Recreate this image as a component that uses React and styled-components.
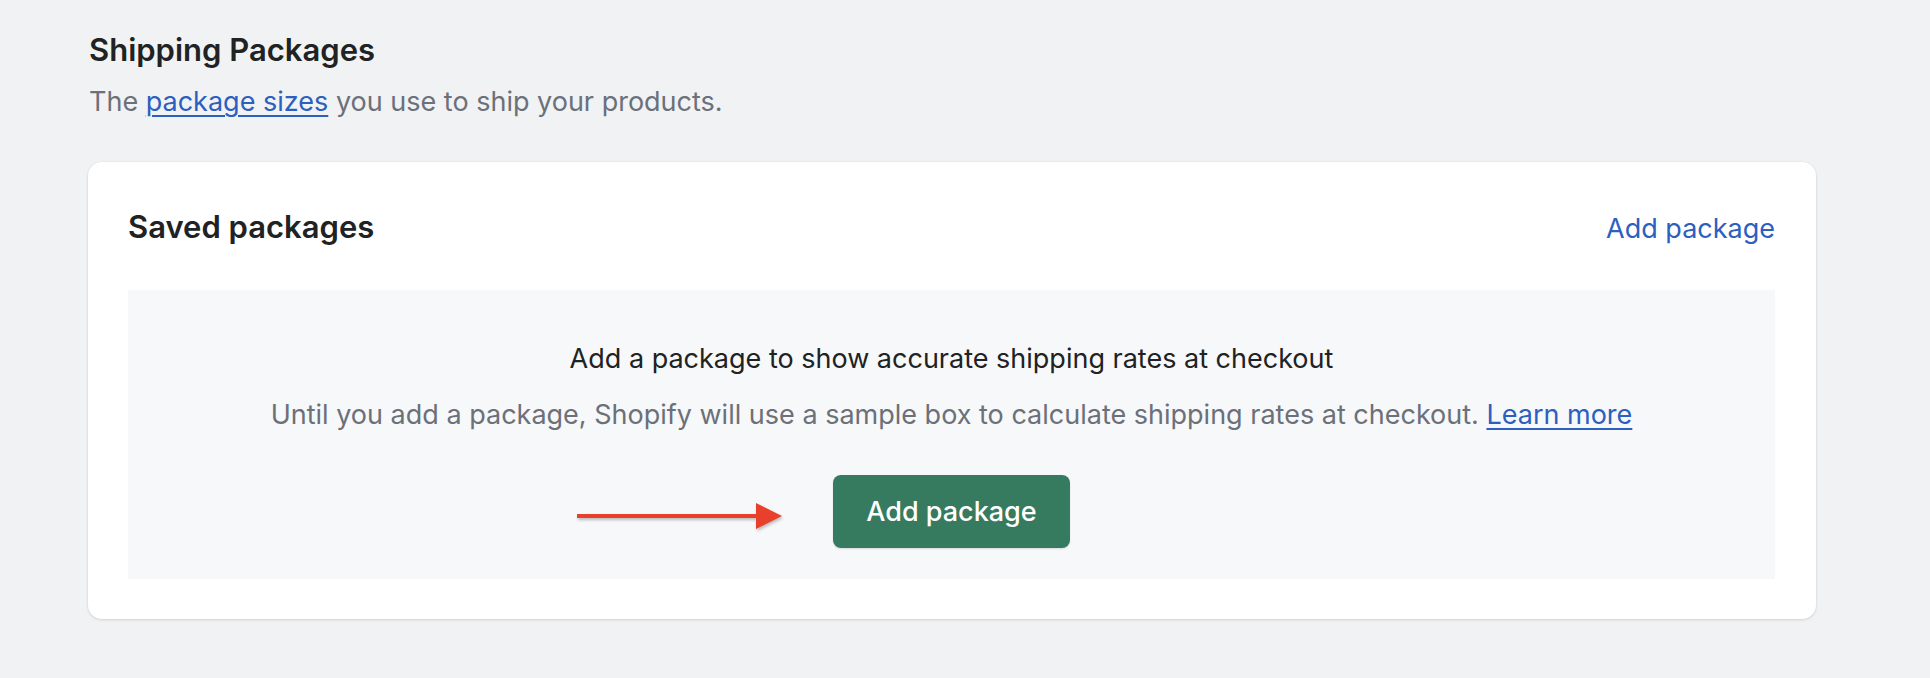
import React from 'react'
import styled, { createGlobalStyle } from 'styled-components'

const GlobalStyle = createGlobalStyle`
  html, body {
    margin: 0;
    padding: 0;
    background: #f1f2f4;
    font-family: Inter, "Noto Sans", "Liberation Sans", sans-serif;
    color: #202223;
    -webkit-font-smoothing: antialiased;
  }
`;

const Page = styled.div`
  padding: 30px 114px 60px 88px;
`;

const SectionHeader = styled.div`
  display: flex;
  flex-direction: column;
  margin-bottom: 40px;
  padding-left: 1px;
`;

const Title = styled.h2`
  margin: 0;
  font-size: 31px;
  line-height: 40px;
  font-weight: 600;
  color: #202223;
`;

const Subtitle = styled.p`
  margin: 12px 0 0;
  font-size: 27px;
  line-height: 40px;
  color: #6b7079;
`;

const InlineLink = styled.a`
  color: #2c5fbf;
  text-decoration: underline;
  text-underline-offset: 4px;
  text-decoration-thickness: 2px;
`;

const Card = styled.section`
  background: #ffffff;
  border-radius: 14px;
  box-shadow: 0 1px 3px rgba(0, 0, 0, 0.12), 0 0 0 1px rgba(0, 0, 0, 0.02);
  padding: 40px 41px 40px 40px;
`;

const CardHeader = styled.div`
  display: flex;
  align-items: baseline;
  justify-content: space-between;
  margin-bottom: 38px;
`;

const CardTitle = styled.h3`
  margin: 0;
  font-size: 31px;
  line-height: 50px;
  font-weight: 600;
  color: #202223;
`;

const PlainLink = styled.a`
  font-size: 27px;
  line-height: 40px;
  color: #2c5fbf;
  text-decoration: none;
  cursor: pointer;
`;

const EmptyState = styled.div`
  background: #f7f8fa;
  display: flex;
  flex-direction: column;
  align-items: center;
  text-align: center;
  padding: 49px 24px 31px;
`;

const EmptyHeading = styled.p`
  margin: 0;
  font-size: 27px;
  line-height: 40px;
  color: #202223;
`;

const EmptyText = styled.p`
  margin: 16px 0 0;
  font-size: 27px;
  line-height: 40px;
  color: #6b7079;
`;

const ActionRow = styled.div`
  position: relative;
  margin-top: 40px;
`;

const PrimaryButton = styled.button`
  height: 73px;
  padding: 0 33px;
  border: none;
  border-radius: 8px;
  background: #367b5f;
  color: #ffffff;
  font-family: inherit;
  font-size: 27px;
  font-weight: 500;
  box-shadow: 0 1px 2px rgba(0, 0, 0, 0.12);
  cursor: pointer;
`;

const Pointer = styled.svg`
  position: absolute;
  right: calc(100% + 50px);
  top: 27px;
  filter: drop-shadow(1px 2px 1.5px rgba(0, 0, 0, 0.25));
`;

const Arrow = () => (
  <Pointer width="206" height="28" viewBox="0 0 206 28" fill="none">
    <rect x="0" y="12" width="184" height="4" fill="#e8402a" />
    <path d="M179 1 L205 14 L179 27 Z" fill="#e8402a" />
  </Pointer>
)

const App = () => (
  <>
    <GlobalStyle />
    <Page>
      <SectionHeader>
        <Title>Shipping Packages</Title>
        <Subtitle>
          The <InlineLink href="#">package sizes</InlineLink> you use to ship your products.
        </Subtitle>
      </SectionHeader>
      <Card>
        <CardHeader>
          <CardTitle>Saved packages</CardTitle>
          <PlainLink>Add package</PlainLink>
        </CardHeader>
        <EmptyState>
          <EmptyHeading>Add a package to show accurate shipping rates at checkout</EmptyHeading>
          <EmptyText>
            Until you add a package, Shopify will use a sample box to calculate shipping rates at
            checkout. <InlineLink href="#">Learn more</InlineLink>
          </EmptyText>
          <ActionRow>
            <Arrow />
            <PrimaryButton>Add package</PrimaryButton>
          </ActionRow>
        </EmptyState>
      </Card>
    </Page>
  </>
)

export default App
